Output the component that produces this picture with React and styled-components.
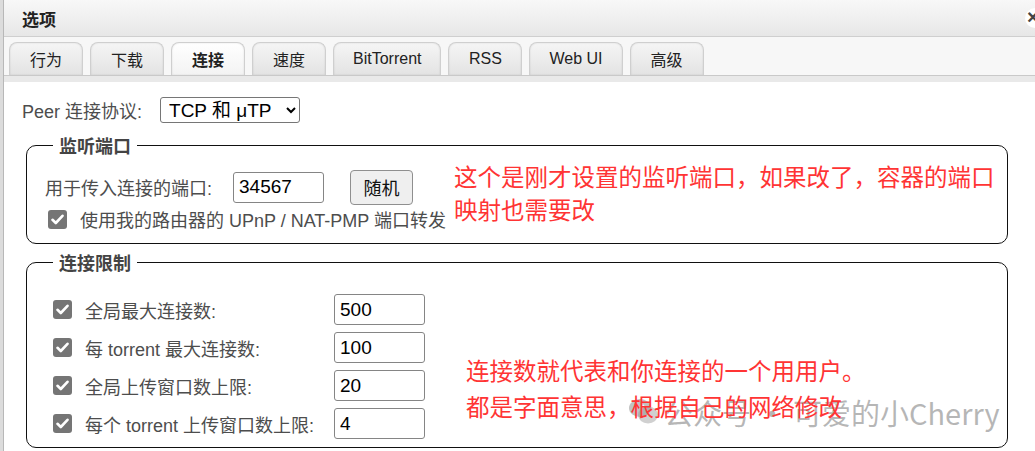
import styled, { createGlobalStyle } from "styled-components";

const GlobalStyle = createGlobalStyle`
  html, body {
    margin: 0;
    padding: 0;
    background: #ffffff;
  }
  #root {
    width: 1035px;
    height: 451px;
    overflow: hidden;
  }
`;

const UI_FONT = `"Liberation Sans", Arial, "Noto Sans CJK SC", sans-serif`;

const tabs = ["行为", "下载", "连接", "速度", "BitTorrent", "RSS", "Web UI", "高级"];

const limits = [
  { label: "全局最大连接数:", value: "500" },
  { label: "每 torrent 最大连接数:", value: "100" },
  { label: "全局上传窗口数上限:", value: "20" },
  { label: "每个 torrent 上传窗口数上限:", value: "4" },
];

function Check() {
  return (
    <CheckBox>
      <svg width="13" height="11" viewBox="0 0 13 11">
        <path
          d="M1.5 5.8 L4.8 9 L11.5 1.8"
          fill="none"
          stroke="#fff"
          strokeWidth="2.6"
          strokeLinecap="round"
          strokeLinejoin="round"
        />
      </svg>
    </CheckBox>
  );
}

function WechatIcon() {
  return (
    <svg width="32" height="30" viewBox="0 0 32 30">
      <ellipse cx="12" cy="11" rx="11" ry="9" fill="rgba(120,120,120,0.45)" />
      <ellipse cx="20" cy="18" rx="10" ry="8.5" fill="rgba(150,150,150,0.45)" />
      <circle cx="8" cy="9" r="1.4" fill="rgba(255,255,255,0.8)" />
      <circle cx="15" cy="9" r="1.4" fill="rgba(255,255,255,0.8)" />
    </svg>
  );
}

export default function App() {
  return (
    <>
      <GlobalStyle />
      <Page>
        <Window>
          <TitleBar>
            选项
            <CloseBtn>×</CloseBtn>
          </TitleBar>
          <TabBar>
            {tabs.map((t) => (
              <Tab key={t} $active={t === "连接"}>
                {t}
              </Tab>
            ))}
          </TabBar>
          <TabBand />
          <Content>
            <ProtoRow>
              <Label>Peer 连接协议:</Label>
              <Select defaultValue="both">
                <option value="both">TCP 和 μTP</option>
                <option value="tcp">TCP</option>
                <option value="utp">μTP</option>
              </Select>
            </ProtoRow>

            <Group>
              <Legend>监听端口</Legend>
              <GroupBody>
                <Column>
                  <PortRow>
                    <Label $width="188px">用于传入连接的端口:</Label>
                    <NumInput defaultValue="34567" />
                    <Button>随机</Button>
                  </PortRow>
                  <CheckRow>
                    <Check />
                    <Label>使用我的路由器的 UPnP / NAT-PMP 端口转发</Label>
                  </CheckRow>
                </Column>
                <Note $top="-9px" $left="8px" $lh="33px">
                  这个是刚才设置的监听端口，如果改了，容器的端口
                  <br />
                  映射也需要改
                </Note>
              </GroupBody>
            </Group>

            <Group $top="5px">
              <Legend>连接限制</Legend>
              <GroupBody>
                <LimitList>
                  {limits.map((l) => (
                    <LimitRow key={l.label}>
                      <Check />
                      <Label>{l.label}</Label>
                      <NumInput defaultValue={l.value} />
                    </LimitRow>
                  ))}
                </LimitList>
                <Note $top="66px" $left="41px" $lh="36px">
                  连接数就代表和你连接的一个用用户。
                  <br />
                  都是字面意思，根据自己的网络修改
                </Note>
              </GroupBody>
            </Group>
          </Content>
          <Watermark>
            <WechatIcon />
            <span>公众号 · 可爱的小Cherry</span>
          </Watermark>
        </Window>
      </Page>
    </>
  );
}

const Page = styled.div`
  width: 1035px;
  height: 451px;
  background: #dcdcdc;
  padding-left: 3px;
  box-sizing: border-box;
  font-family: ${UI_FONT};
`;

const Window = styled.div`
  position: relative;
  height: 100%;
  background: #fff;
  border-left: 1px solid #b8b8b8;
`;

const TitleBar = styled.div`
  position: relative;
  height: 36px;
  display: flex;
  align-items: center;
  padding-left: 18px;
  background: linear-gradient(#f8f8f8, #e7e7e7);
  border-bottom: 1px solid #cfcfcf;
  font-size: 17px;
  font-weight: bold;
  color: #222;
`;

const CloseBtn = styled.span`
  position: absolute;
  right: -10px;
  top: 8px;
  width: 20px;
  height: 20px;
  border-radius: 50%;
  background: #fff;
  color: #444;
  font-size: 20px;
  font-weight: bold;
  line-height: 19px;
  text-indent: 2px;
`;

const TabBar = styled.div`
  display: flex;
  align-items: flex-end;
  gap: 7px;
  height: 38px;
  padding-left: 5px;
  background: #f7f7f7;
  border-bottom: 1px solid #c9c9c9;
`;

const Tab = styled.div`
  min-width: 74px;
  height: 33px;
  box-sizing: border-box;
  padding: 0 19px;
  display: flex;
  align-items: center;
  justify-content: center;
  border: 1px solid #cfcfcf;
  border-bottom: none;
  border-radius: 8px 8px 0 0;
  background: ${(p) =>
    p.$active ? "linear-gradient(#ffffff, #f3f3f3)" : "linear-gradient(#f5f5f5, #e3e3e3)"};
  box-shadow: inset 0 0 2px rgba(0, 0, 0, 0.12);
  font-size: 16px;
  font-weight: ${(p) => (p.$active ? "bold" : "normal")};
  color: #222;
`;

const TabBand = styled.div`
  height: 6px;
  background: #e9e9e9;
`;

const Content = styled.div`
  padding: 15px 27px 0 18px;
`;

const ProtoRow = styled.div`
  display: flex;
  align-items: center;
  gap: 18px;
  height: 26px;
`;

const Label = styled.span`
  font-size: 18px;
  color: #4d4d4d;
  white-space: nowrap;
  width: ${(p) => p.$width || "auto"};
  flex-shrink: 0;
`;

const Select = styled.select`
  width: 140px;
  height: 26px;
  padding: 0 2px 0 4px;
  font-family: ${UI_FONT};
  font-size: 19px;
  color: #000;
  background: #fff;
  border: 1px solid #767676;
  border-radius: 3px;
`;

const Group = styled.fieldset`
  margin: ${(p) => p.$top || "9px"} 0 0 4px;
  padding: 11px 18px 8px 18px;
  border: 1px solid #111;
  border-radius: 10px;
  min-width: 0;
`;

const Legend = styled.legend`
  margin-left: 8px;
  padding: 0 6px;
  font-size: 18px;
  font-weight: bold;
  color: #444;
`;

const GroupBody = styled.div`
  display: flex;
  align-items: flex-start;
`;

const Column = styled.div`
  display: flex;
  flex-direction: column;
  gap: 2px;
`;

const PortRow = styled.div`
  display: flex;
  align-items: center;
  height: 36px;
`;

const NumInput = styled.input`
  width: 91px;
  height: 31px;
  box-sizing: border-box;
  padding: 0 5px;
  font-family: ${UI_FONT};
  font-size: 19px;
  color: #000;
  border: 1px solid #858585;
  border-radius: 3px;
  outline: none;
`;

const Button = styled.button`
  margin-left: 26px;
  width: 63px;
  height: 35px;
  font-family: ${UI_FONT};
  font-size: 18px;
  color: #111;
  background: #efefef;
  border: 1px solid #8f8f8f;
  border-radius: 4px;
`;

const CheckRow = styled.div`
  display: flex;
  align-items: center;
  gap: 13px;
  padding-left: 3px;
  height: 24px;
`;

const CheckBox = styled.span`
  width: 19px;
  height: 19px;
  flex-shrink: 0;
  border-radius: 3px;
  background: #757575;
  display: flex;
  align-items: center;
  justify-content: center;
`;

const LimitList = styled.div`
  display: flex;
  flex-direction: column;
  gap: 7px;
  padding-left: 8px;
  margin-top: 8px;
`;

const LimitRow = styled.div`
  display: flex;
  align-items: center;
  gap: 13px;
  height: 31px;

  & > ${Label} {
    width: 236px;
  }
`;

const Note = styled.div`
  position: relative;
  z-index: 2;
  top: ${(p) => p.$top};
  margin-left: ${(p) => p.$left};
  font-family: "Noto Sans CJK SC", sans-serif;
  font-size: 23.5px;
  line-height: ${(p) => p.$lh};
  color: #ff3434;
  white-space: nowrap;
`;

const Watermark = styled.div`
  position: absolute;
  z-index: 1;
  left: 624px;
  top: 391px;
  display: flex;
  align-items: center;
  gap: 4px;
  font-family: "Noto Sans CJK SC", sans-serif;
  font-size: 29px;
  color: rgba(110, 110, 110, 0.5);
  pointer-events: none;
  white-space: nowrap;
`;
